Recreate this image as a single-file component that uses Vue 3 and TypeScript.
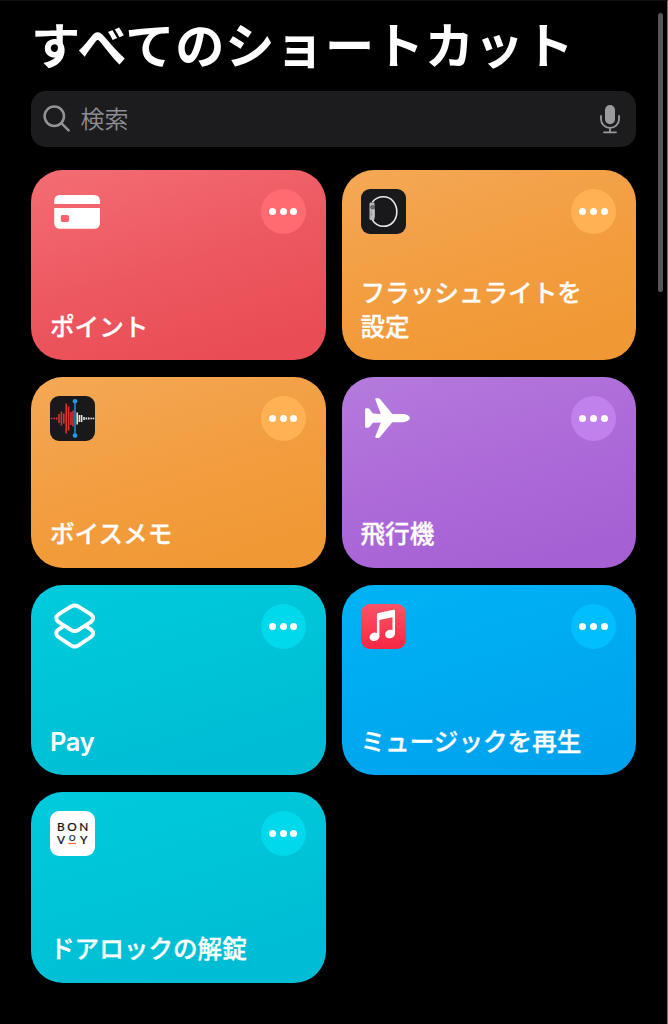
<script setup lang="ts">
type Icon = 'card' | 'watch' | 'voice' | 'plane' | 'shortcuts' | 'music' | 'bonvoy'

interface Shortcut {
  title: string
  icon: Icon
  color: string
}

const shortcuts: Shortcut[] = [
  { title: 'ポイント', icon: 'card', color: 'red' },
  { title: 'フラッシュライトを設定', icon: 'watch', color: 'orange' },
  { title: 'ボイスメモ', icon: 'voice', color: 'orange' },
  { title: '飛行機', icon: 'plane', color: 'purple' },
  { title: 'Pay', icon: 'shortcuts', color: 'teal' },
  { title: 'ミュージックを再生', icon: 'music', color: 'blue' },
  { title: 'ドアロックの解錠', icon: 'bonvoy', color: 'teal' },
]

const isLatin = (text: string): boolean => /^[\x20-\x7e]+$/.test(text)

const redBars = [
  [1.8, 0.8], [4.2, 0.8], [6.6, 1.2], [9, 4.5], [11.4, 7], [13.8, 5], [16.2, 15],
  [18.6, 12], [21, 6.5], [23, 8],
]
const whiteBars = [
  [27.2, 6], [29.4, 3.5], [31.6, 3.5], [34, 1.5], [36.4, 1], [38.8, 0.9], [41.2, 0.8], [43.4, 0.8],
]
</script>

<template>
  <main class="screen">
    <h1>すべてのショートカット</h1>
    <div class="search">
      <svg class="lens" width="28" height="28" viewBox="0 0 28 28">
        <circle cx="11.3" cy="11.2" r="9.7" />
        <path d="M18.3 18.2L25.6 25.3" />
      </svg>
      <span class="placeholder">検索</span>
      <svg class="mic" width="20" height="30" viewBox="0 0 20 30">
        <rect x="5" y="1" width="10" height="19.3" rx="5" />
        <path d="M1 12v3.2a9 8.6 0 0 0 18 0V12M10 24v4.3M4 28.3h12" />
      </svg>
    </div>

    <section class="grid">
      <article v-for="s in shortcuts" :key="s.title" class="tile" :class="s.color">
        <div class="top">
          <svg class="icon" width="45" height="45" viewBox="0 0 45 45">
            <g v-if="s.icon === 'card'" fill="#fff">
              <path d="M4.2 15V12Q4.2 6 10.2 6H44Q50 6 50 12V15Z" />
              <path
                fill-rule="evenodd"
                d="M4.2 19H50V33.7Q50 39.7 44 39.7H10.2Q4.2 39.7 4.2 33.7ZM12.4 26Q10.8 26 10.8 27.6V31.3Q10.8 33 12.4 33H17.4Q19 33 19 31.3V27.6Q19 26 17.4 26Z"
              />
            </g>
            <g v-else-if="s.icon === 'watch'">
              <rect width="45" height="45" rx="9" fill="#19191b" />
              <path d="M11.3 13.2C14 9.7 18 7.8 22.5 7.8C30.3 7.8 35.8 14.5 35.8 22.7C35.8 31 30.3 37.3 22.5 37.3C17.8 37.3 13.8 34.8 11.3 30.8" fill="none" stroke="#e9e9e9" stroke-width="1.6" />
              <rect x="8.5" y="13.5" width="5" height="17.5" rx="1.2" fill="#b9b9bc" />
              <circle cx="11.4" cy="18.2" r="1.7" fill="#777" stroke="#3b3b3d" stroke-width=".7" />
              <path d="M13.2 20.5v8" stroke="#e2e2e2" stroke-width=".8" />
              <path d="M10.2 23v4" stroke="#858589" stroke-width=".7" />
            </g>
            <g v-else-if="s.icon === 'voice'">
              <rect width="45" height="45" rx="9" fill="#19191b" />
              <path v-for="b in redBars" :key="b[0]" :d="`M${b[0]} ${22.5 - b[1]}V${22.5 + b[1]}`" stroke="#df302c" stroke-width="1.6" />
              <path v-for="b in whiteBars" :key="b[0]" :d="`M${b[0]} ${22.5 - b[1]}V${22.5 + b[1]}`" stroke="#e4e4e4" stroke-width="1.6" />
              <path d="M25 5V40" stroke="#1e8fdf" stroke-width="1.5" />
              <circle cx="25" cy="5.3" r="2.3" fill="#1e9bf0" />
              <circle cx="25" cy="39.6" r="2.3" fill="#1e9bf0" />
            </g>
            <path
              v-else-if="s.icon === 'plane'"
              fill="#fff"
              transform="translate(-.7 0)"
              d="M4.8 13.2Q4.8 12.2 5.8 12.2H7.6Q8.6 12.2 9.2 13L12.6 17.5L20.5 17.9L15 3.6Q14.6 2.2 16 2.2H18Q19 2.2 19.7 3.1L32 18.1H42.5C46.5 18.1 49.6 20.4 49.6 22.1C49.6 23.9 46.5 26.2 42.5 26.2H32L19.7 40.9Q19 41.9 18 41.9H16Q14.6 41.9 15 40.5L20.5 26.5L12.6 26.8L9.2 31Q8.6 31.8 7.6 31.8H5.8Q4.8 31.8 4.8 30.8Z"
            />
            <g v-else-if="s.icon === 'shortcuts'" fill="none" stroke="#fff" stroke-width="3.9" stroke-linejoin="round">
              <path d="M20.9 2.6Q24.7 .3 28.5 2.6L41 10.4Q45.4 14.1 41 17.8L28.5 25.8Q24.7 28.2 20.9 25.8L8.4 17.8Q4 14.1 8.4 10.4Z" />
              <path d="M13.2 22.3L8.4 25.6Q4 29.3 8.4 33L20.9 41.4Q24.7 43.8 28.5 41.4L41 33Q45.4 29.3 41 25.6L36.2 22.3" />
            </g>
            <g v-else-if="s.icon === 'music'">
              <defs>
                <linearGradient id="musicFill" x2="0" y2="1">
                  <stop stop-color="#fb5468" />
                  <stop offset="1" stop-color="#f92743" />
                </linearGradient>
              </defs>
              <rect width="45" height="45" rx="9" fill="url(#musicFill)" />
              <g fill="#fff">
                <path d="M15.9 10.7Q15.9 9.3 17.3 9L32.5 5.8Q34 5.6 34 7V30.3H31.5V13.3L18.4 16V33H15.9Z" />
                <ellipse cx="13.4" cy="32.8" rx="5" ry="4.2" transform="rotate(-18 13.4 32.8)" />
                <ellipse cx="29" cy="30" rx="5" ry="4.2" transform="rotate(-18 29 30)" />
              </g>
            </g>
            <g v-else class="bonvoy">
              <rect width="45" height="45" rx="9" fill="#fff" />
              <text x="10.8" y="19.6">B</text>
              <text x="22.1" y="19.6">O</text>
              <text x="33.8" y="19.6">N</text>
              <text x="10.9" y="32.7">V</text>
              <text class="small" x="22.1" y="29.6">O</text>
              <text x="33.8" y="32.7">Y</text>
              <path d="M18.2 32.5H26" stroke="#f2682c" stroke-width="1.2" />
            </g>
          </svg>
          <button class="more" aria-label="詳細"><i></i><i></i><i></i></button>
        </div>
        <h2 :class="{ latin: isLatin(s.title) }">{{ s.title }}</h2>
      </article>
    </section>
    <div class="scrollbar"></div>
  </main>
</template>

<style>
body {
  margin: 0;
  background: #000;
}
</style>

<style scoped>
.screen {
  box-sizing: border-box;
  position: relative;
  width: 668px;
  height: 1024px;
  padding: 10px 31px 0;
  overflow: hidden;
  background: #000;
  border-top: 1px solid #121214;
  border-right: 1px solid #77777a;
  color: #fff;
  font-family: Inter, "Noto Sans CJK JP", sans-serif;
}
h1 {
  margin: 0;
  height: 80px;
  line-height: 70px;
  font-size: 49.2px;
  font-weight: 700;
  letter-spacing: 0.7px;
  white-space: nowrap;
}
.search {
  box-sizing: border-box;
  display: flex;
  align-items: center;
  width: 605px;
  height: 56px;
  padding: 0 16px 0 12px;
  border-radius: 15px;
  background: #1c1c1e;
  color: #8e8e95;
}
.lens {
  fill: none;
  stroke: #929298;
  stroke-width: 2.5;
  stroke-linecap: round;
}
.placeholder {
  margin: 2px 0 0 9.5px;
  font-size: 24px;
  font-weight: 350;
  line-height: 36px;
}
.mic {
  margin-left: auto;
  fill: #99999f;
}
.mic path {
  fill: none;
  stroke: #99999f;
  stroke-width: 1.8;
  stroke-linecap: round;
}
.grid {
  display: grid;
  grid-template-columns: 294.5px 294.5px;
  grid-auto-rows: 190.4px;
  gap: 17.1px 16px;
  margin-top: 23px;
}
.tile {
  box-sizing: border-box;
  display: flex;
  flex-direction: column;
  justify-content: space-between;
  padding: 19px 20px 16.7px 19px;
  border-radius: 32px;
}
.red { background: linear-gradient(163deg, #f36d73, #ed5860 50%, #e94c54 88%); }
.orange { background: linear-gradient(163deg, #f5a855, #f29d40 50%, #f09833 88%); }
.purple { background: linear-gradient(163deg, #b57bdc, #ac69d8 50%, #a561d3 88%); }
.teal { background: linear-gradient(163deg, #00cbdc, #00c3d7 50%, #00bcd4 88%); }
.blue { background: linear-gradient(163deg, #00b3f5, #00aaf1 50%, #00a2ee 88%); }
.top {
  display: flex;
  justify-content: space-between;
}
.icon {
  overflow: visible;
}
.more {
  display: flex;
  align-items: center;
  justify-content: center;
  gap: 3.7px;
  width: 45px;
  height: 45px;
  padding: 0;
  border: 0;
  border-radius: 50%;
}
.more i {
  width: 7px;
  height: 7px;
  border-radius: 50%;
  background: #fff;
}
.red .more { background: #ff6b71; }
.orange .more { background: #ffb154; }
.purple .more { background: #c181ed; }
.teal .more { background: #00d9ec; }
.blue .more { background: #00beff; }
h2 {
  margin: 0;
  padding-right: 26px;
  font-size: 24.6px;
  font-weight: 500;
  line-height: 34px;
  -webkit-text-stroke: 0.3px #fff;
}
h2.latin {
  font-size: 25.4px;
  font-weight: 600;
  letter-spacing: -0.3px;
  -webkit-text-stroke: 0;
}
.bonvoy text {
  font: 500 11.8px Lato, sans-serif;
  fill: #161616;
  stroke: #161616;
  stroke-width: 0.2px;
  text-anchor: middle;
}
.bonvoy .small {
  font-size: 8px;
}
.scrollbar {
  position: absolute;
  top: 12px;
  right: 4px;
  width: 5px;
  height: 279px;
  border-radius: 3px;
  background: #565658;
}
</style>
